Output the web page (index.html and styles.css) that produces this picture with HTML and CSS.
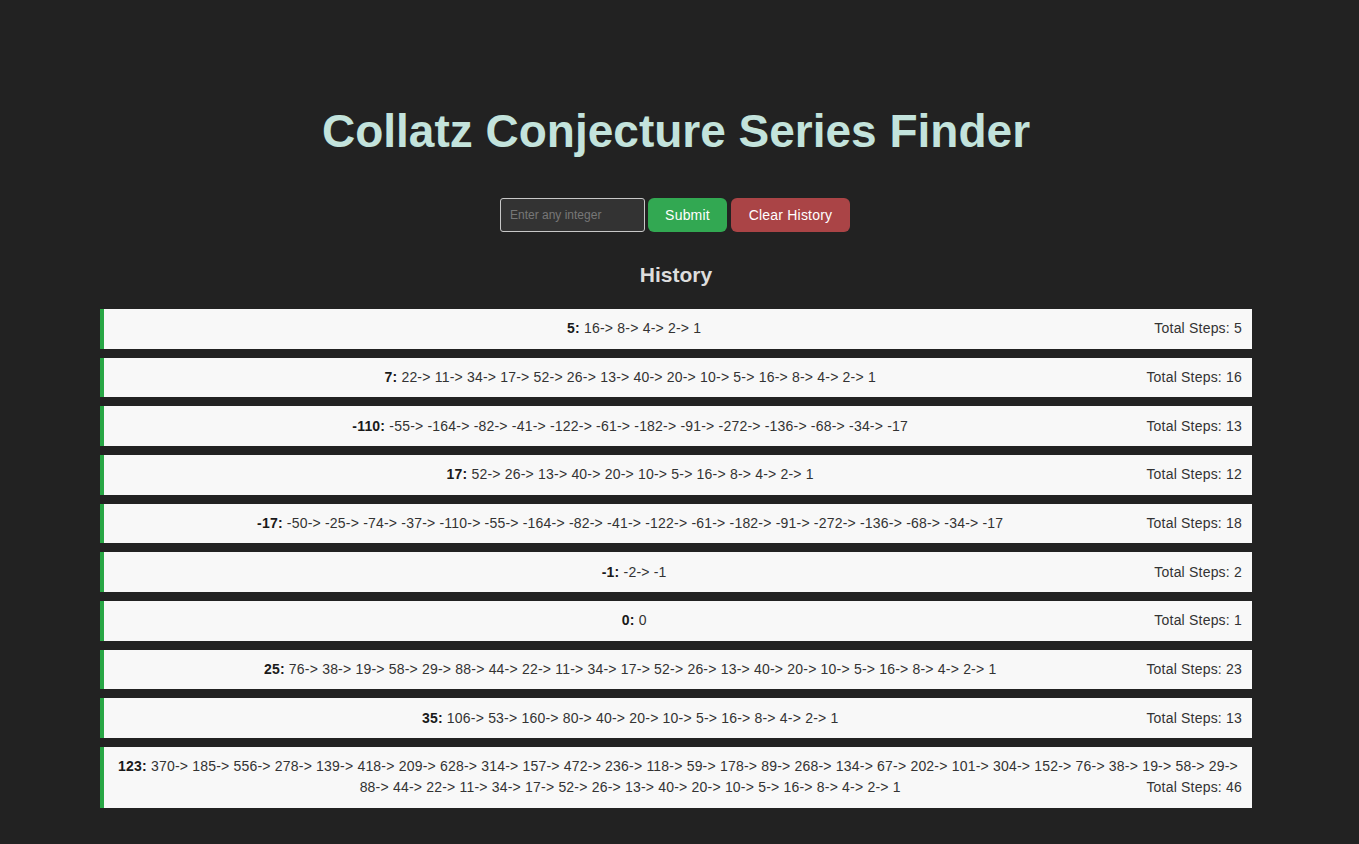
FILE: index.html
```html
<!DOCTYPE html>
<html lang="en">
<head>
<meta charset="utf-8">
<title>Collatz Conjecture Series Finder</title>
<link rel="stylesheet" href="styles.css">
</head>
<body>
<div class="page">
  <h1 class="title">Collatz Conjecture Series Finder</h1>
  <form class="controls" onsubmit="return false">
    <input class="num-input" type="text" placeholder="Enter any integer">
    <button class="btn btn-submit" type="submit">Submit</button>
    <button class="btn btn-clear" type="button">Clear History</button>
  </form>
  <h2 class="history-title">History</h2>
  <div class="history">
    <div class="item"><strong>5:</strong> 16-&gt; 8-&gt; 4-&gt; 2-&gt; 1<span class="steps">Total Steps: 5</span></div>
    <div class="item"><strong>7:</strong> 22-&gt; 11-&gt; 34-&gt; 17-&gt; 52-&gt; 26-&gt; 13-&gt; 40-&gt; 20-&gt; 10-&gt; 5-&gt; 16-&gt; 8-&gt; 4-&gt; 2-&gt; 1<span class="steps">Total Steps: 16</span></div>
    <div class="item"><strong>-110:</strong> -55-&gt; -164-&gt; -82-&gt; -41-&gt; -122-&gt; -61-&gt; -182-&gt; -91-&gt; -272-&gt; -136-&gt; -68-&gt; -34-&gt; -17<span class="steps">Total Steps: 13</span></div>
    <div class="item"><strong>17:</strong> 52-&gt; 26-&gt; 13-&gt; 40-&gt; 20-&gt; 10-&gt; 5-&gt; 16-&gt; 8-&gt; 4-&gt; 2-&gt; 1<span class="steps">Total Steps: 12</span></div>
    <div class="item"><strong>-17:</strong> -50-&gt; -25-&gt; -74-&gt; -37-&gt; -110-&gt; -55-&gt; -164-&gt; -82-&gt; -41-&gt; -122-&gt; -61-&gt; -182-&gt; -91-&gt; -272-&gt; -136-&gt; -68-&gt; -34-&gt; -17<span class="steps">Total Steps: 18</span></div>
    <div class="item"><strong>-1:</strong> -2-&gt; -1<span class="steps">Total Steps: 2</span></div>
    <div class="item"><strong>0:</strong> 0<span class="steps">Total Steps: 1</span></div>
    <div class="item"><strong>25:</strong> 76-&gt; 38-&gt; 19-&gt; 58-&gt; 29-&gt; 88-&gt; 44-&gt; 22-&gt; 11-&gt; 34-&gt; 17-&gt; 52-&gt; 26-&gt; 13-&gt; 40-&gt; 20-&gt; 10-&gt; 5-&gt; 16-&gt; 8-&gt; 4-&gt; 2-&gt; 1<span class="steps">Total Steps: 23</span></div>
    <div class="item"><strong>35:</strong> 106-&gt; 53-&gt; 160-&gt; 80-&gt; 40-&gt; 20-&gt; 10-&gt; 5-&gt; 16-&gt; 8-&gt; 4-&gt; 2-&gt; 1<span class="steps">Total Steps: 13</span></div>
    <div class="item"><strong>123:</strong> 370-&gt; 185-&gt; 556-&gt; 278-&gt; 139-&gt; 418-&gt; 209-&gt; 628-&gt; 314-&gt; 157-&gt; 472-&gt; 236-&gt; 118-&gt; 59-&gt; 178-&gt; 89-&gt; 268-&gt; 134-&gt; 67-&gt; 202-&gt; 101-&gt; 304-&gt; 152-&gt; 76-&gt; 38-&gt; 19-&gt; 58-&gt; 29-&gt; 88-&gt; 44-&gt; 22-&gt; 11-&gt; 34-&gt; 17-&gt; 52-&gt; 26-&gt; 13-&gt; 40-&gt; 20-&gt; 10-&gt; 5-&gt; 16-&gt; 8-&gt; 4-&gt; 2-&gt; 1<span class="steps">Total Steps: 46</span></div>
  </div>
</div>
</body>
</html>
```

FILE: styles.css
```css
html, body {
  margin: 0;
  padding: 0;
  background: #222222;
}

body {
  font-family: "Liberation Sans", Arial, Helvetica, sans-serif;
  color: #333333;
  overflow: hidden;
}

.page {
  width: 1352px;
  display: flex;
  flex-direction: column;
  align-items: center;
}

.title {
  margin: 104px 0 0;
  font-size: 46px;
  line-height: 54px;
  font-weight: bold;
  color: #c3e3dc;
  text-align: center;
}

.controls {
  margin: 40px 0 0;
  display: flex;
  align-items: center;
  gap: 3px;
}

.num-input {
  box-sizing: border-box;
  width: 145px;
  height: 34px;
  padding: 0 9px;
  background: #333333;
  border: 1px solid #c8c8c8;
  border-radius: 3px;
  color: #eeeeee;
  font-family: "Liberation Sans", Arial, sans-serif;
  font-size: 12px;
  outline: none;
}

.num-input::placeholder {
  color: #777777;
}

.btn {
  box-sizing: border-box;
  height: 34px;
  padding: 0;
  border: none;
  border-radius: 6px;
  color: #ffffff;
  font-family: "Liberation Sans", Arial, sans-serif;
  font-size: 14px;
  letter-spacing: 0.2px;
  cursor: pointer;
  margin-top: -1px;
}

.btn-submit {
  width: 79px;
  background: #32a852;
}

.btn-clear {
  width: 119px;
  margin-left: 1px;
  margin-right: 2px;
  background: #aa4446;
}

.history-title {
  margin: 30px 0 0;
  font-size: 21px;
  line-height: 25px;
  font-weight: bold;
  color: #dddddd;
}

.history {
  width: 1152px;
  margin-top: 22px;
  display: flex;
  flex-direction: column;
  gap: 9px;
}

.item {
  display: flow-root;
  background: #f8f8f8;
  border-left: 4px solid #28a745;
  padding: 9.33px 10px;
  font-size: 14px;
  line-height: 21px;
  letter-spacing: 0.2px;
  text-align: center;
  color: #333333;
}

.item strong {
  color: #1a1a1a;
}

.steps {
  float: right;
}
```
